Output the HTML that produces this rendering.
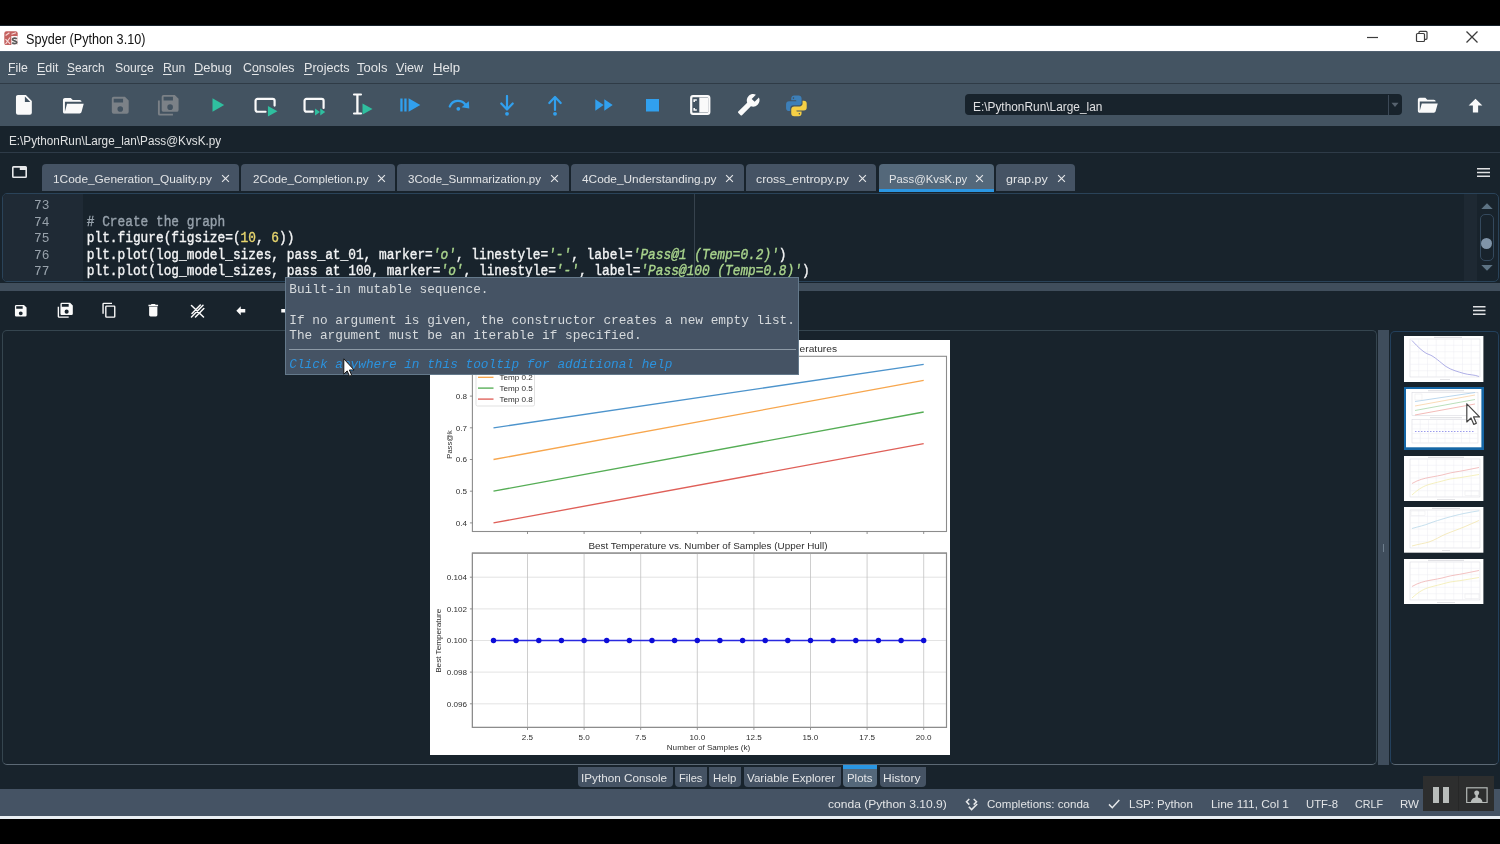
<!DOCTYPE html><html><head><meta charset="utf-8"><title>Spyder (Python 3.10)</title><style>
*{box-sizing:border-box;margin:0;padding:0}
html,body{width:1500px;height:844px;overflow:hidden;background:#000}
body{position:relative;font-family:"Liberation Sans",sans-serif;color:#e0e1e3;font-size:13px}
div,span,svg{position:absolute}
.t{white-space:nowrap;line-height:1}
.mono{font-family:"Liberation Mono",monospace;white-space:pre;line-height:1;transform:scaleY(1.07);transform-origin:0 43.65%}
.tab{background:#455364;border-radius:4px 4px 0 0}
.tab.sel{background:#54687a}
.bt{background:#455364;border-radius:0 0 4px 4px}
.cm{color:#96a1ab;position:static}.nu{color:#e8d66e;position:static}.st{color:#a9d48d;font-style:italic;position:static}
u{text-decoration:underline;text-decoration-thickness:1.1px;text-underline-offset:1.6px}
</style></head><body><div id="root" style="left:0;top:0;width:1500px;height:844px;background:#000;filter:blur(0.6px)">
<div style="left:0px;top:25px;width:1500px;height:793px;background:#18232c;"></div>
<div style="left:0px;top:25.6px;width:1500px;height:25.4px;background:#ffffff;"></div>
<svg style="left:4px;top:30.500px" width="14" height="14.500" viewBox="0 0 14 14.500"><rect x="0.300" y="0.300" width="13.400" height="13.900" rx="2.200" fill="#c4615f"/><path d="M7.300 5h6.400v7a2.200 2.200 0 0 1-2.200 2.200h-4.200z" fill="#fdf7f7"/><path d="M1.600 13l4.400-6.500M1.500 8.200l4.600 4.600M1.600 4.500l3.800-2.800M7.500 3.200l4.500-1.500" stroke="#f6d9d8" stroke-width="1.200" fill="none"/><path d="M12.800 7.900c-1.200-1.100-4.300-1.100-4.300 .6c0 1.700 4.300 .900 4.300 2.800c0 1.700-3.500 1.600-4.600 .3" stroke="#5a5a5a" stroke-width="1.700" fill="none"/></svg>
<span class="t" style="left:25.6px;top:32.21px;font-size:14px;color:#111;transform:scaleX(0.9025);transform-origin:0 0;">Spyder (Python 3.10)</span>
<svg style="left:1366px;top:31px" width="14" height="14" viewBox="0 0 14 14"><path d="M1 6.500h11" stroke="#3c3c3c" stroke-width="1.200"/></svg>
<svg style="left:1415px;top:30px" width="14" height="14" viewBox="0 0 14 14"><rect x="1.500" y="3.500" width="8" height="8" rx="1" fill="none" stroke="#3c3c3c" stroke-width="1.200"/><path d="M4 3.500v-1.200a1 1 0 0 1 1-1h6a1 1 0 0 1 1 1v6a1 1 0 0 1-1 1h-1.500" fill="none" stroke="#3c3c3c" stroke-width="1.200"/></svg>
<svg style="left:1465px;top:30px" width="14" height="14" viewBox="0 0 14 14"><path d="M1.500 1.500l11 11M12.500 1.500l-11 11" stroke="#3c3c3c" stroke-width="1.300"/></svg>
<div style="left:0px;top:51px;width:1500px;height:33px;background:#445462;"></div>
<div style="left:0px;top:51px;width:1500px;height:1px;background:#506070;"></div>
<span class="t" style="left:7.7px;top:61.21px;font-size:13.4px;color:#e4e6e8;transform:scaleX(0.9170);transform-origin:0 0;"><u style="position:static">F</u>ile</span>
<span class="t" style="left:36.5px;top:61.21px;font-size:13.4px;color:#e4e6e8;transform:scaleX(0.9268);transform-origin:0 0;"><u style="position:static">E</u>dit</span>
<span class="t" style="left:67.2px;top:61.21px;font-size:13.4px;color:#e4e6e8;transform:scaleX(0.8856);transform-origin:0 0;"><u style="position:static">S</u>earch</span>
<span class="t" style="left:114.9px;top:61.21px;font-size:13.4px;color:#e4e6e8;transform:scaleX(0.9115);transform-origin:0 0;">Sour<u style="position:static">c</u>e</span>
<span class="t" style="left:162.9px;top:61.21px;font-size:13.4px;color:#e4e6e8;transform:scaleX(0.9112);transform-origin:0 0;"><u style="position:static">R</u>un</span>
<span class="t" style="left:194.4px;top:61.21px;font-size:13.4px;color:#e4e6e8;transform:scaleX(0.9598);transform-origin:0 0;"><u style="position:static">D</u>ebug</span>
<span class="t" style="left:242.5px;top:61.21px;font-size:13.4px;color:#e4e6e8;transform:scaleX(0.9219);transform-origin:0 0;">C<u style="position:static">o</u>nsoles</span>
<span class="t" style="left:303.6px;top:61.21px;font-size:13.4px;color:#e4e6e8;transform:scaleX(0.9420);transform-origin:0 0;"><u style="position:static">P</u>rojects</span>
<span class="t" style="left:357.2px;top:61.21px;font-size:13.4px;color:#e4e6e8;transform:scaleX(0.9718);transform-origin:0 0;"><u style="position:static">T</u>ools</span>
<span class="t" style="left:396.4px;top:61.21px;font-size:13.4px;color:#e4e6e8;transform:scaleX(0.9444);transform-origin:0 0;"><u style="position:static">V</u>iew</span>
<span class="t" style="left:432.9px;top:61.21px;font-size:13.4px;color:#e4e6e8;transform:scaleX(0.9833);transform-origin:0 0;"><u style="position:static">H</u>elp</span>
<div style="left:0px;top:84px;width:1500px;height:41.7px;background:#435361;"></div>
<div style="left:0px;top:83px;width:1500px;height:1.2px;background:#2f3b46;"></div>
<div id="tb" style="left:0;top:84px;width:1500px;height:41px">
<svg style="left:11.8px;top:9.1px" width="23.8" height="23.8" viewBox="0 0 24 24"><path d="M13,9V3.5L18.5,9M6,2C4.89,2 4,2.89 4,4V20A2,2 0 0,0 6,22H18A2,2 0 0,0 20,20V8L14,2H6Z" fill="#fafafa"/></svg>
<svg style="left:60.8px;top:9.6px" width="23.5" height="23.5" viewBox="0 0 24 24"><path d="M19,20H4C2.89,20 2,19.1 2,18V6C2,4.89 2.89,4 4,4H10L12,6H19A2,2 0 0,1 21,8H21L4,8V18L6.14,10H23.21L20.93,18.5C20.7,19.37 19.92,20 19,20Z" fill="#fafafa"/></svg>
<svg style="left:109.0px;top:10.2px" width="22.5" height="22.5" viewBox="0 0 24 24"><path d="M15,9H5V5H15M12,19A3,3 0 0,1 9,16A3,3 0 0,1 12,13A3,3 0 0,1 15,16A3,3 0 0,1 12,19M17,3H5C3.89,3 3,3.9 3,5V19A2,2 0 0,0 5,21H19A2,2 0 0,0 21,19V7L17,3Z" fill="#7b8187"/></svg>
<svg style="left:157.2px;top:10.2px" width="22.5" height="22.5" viewBox="0 0 24 24"><path d="M17,7V3H7V7H17M14,17A3,3 0 0,0 17,14A3,3 0 0,0 14,11A3,3 0 0,0 11,14A3,3 0 0,0 14,17M19,1L23,5V17A2,2 0 0,1 21,19H7C5.89,19 5,18.1 5,17V3A2,2 0 0,1 7,1H19M1,7H3V21H17V23H3A2,2 0 0,1 1,21V7Z" fill="#7b8187"/></svg>
<svg style="left:212px;top:14px" width="13" height="14" viewBox="0 0 13 14"><path d="M0.500,0.300L12.200,7L0.500,13.700Z" fill="#2fbf9f"/></svg>
<svg style="left:253.5px;top:12.5px" width="25" height="20" viewBox="0 0 26 21"><path d="M12,15.500H3.500a2,2 0 0 1-2-2v-9.500a2,2 0 0 1 2-2h16a2,2 0 0 1 2,2v5" fill="none" stroke="#fafafa" stroke-width="2.300" stroke-linecap="round"/><path d="M14.500,9.500L24.500,15L14.500,20.500Z" fill="#2fbf9f"/></svg>
<svg style="left:302.5px;top:11.5px" width="25" height="20" viewBox="0 0 26 21"><path d="M10,16.500H3.500a2,2 0 0 1-2-2v-9.500a2,2 0 0 1 2-2h16a2,2 0 0 1 2,2v7.500" fill="none" stroke="#fafafa" stroke-width="2.300" stroke-linecap="round"/><path d="M12.500,13L17.700,16.800L12.500,20.600ZM18,13L23.200,16.800L18,20.600Z" fill="#2fbf9f"/></svg>
<svg style="left:352px;top:9px" width="22" height="23" viewBox="0 0 22 23"><path d="M2,1.500h7M2,20.500h7" fill="none" stroke="#fafafa" stroke-width="2.100" stroke-linecap="round"/><path d="M5.400,1.500v19" stroke="#fafafa" stroke-width="2.300"/><path d="M10.500,10.500L20.500,16L10.500,21.500Z" fill="#2fbf9f"/></svg>
<svg style="left:400px;top:14px" width="21" height="14" viewBox="0 0 21 14"><path d="M0.300,0.500h2.300v13h-2.300zM4.300,0.500h2.300v13h-2.300zM8.600,0.300L20.300,7L8.600,13.700Z" fill="#31a0ee"/></svg>
<svg style="left:448px;top:14px" width="23" height="14" viewBox="0 0 23 14"><path d="M1.800,8.500C4.500,1.500 13.500,1.200 17.300,6.500" fill="none" stroke="#31a0ee" stroke-width="2.300" stroke-linecap="round"/><path d="M20.800,3.200L21.300,10.600L13.600,9.300Z" fill="#31a0ee"/><circle cx="10.300" cy="10.800" r="1.900" fill="#31a0ee"/></svg>
<svg style="left:499px;top:11px" width="16" height="21" viewBox="0 0 16 21"><path d="M8,1v12.500M2.300,8.500l5.700,6l5.700,-6" fill="none" stroke="#31a0ee" stroke-width="2.200" stroke-linecap="round" stroke-linejoin="round"/><circle cx="8" cy="18.800" r="1.900" fill="#31a0ee"/></svg>
<svg style="left:547px;top:11px" width="16" height="21" viewBox="0 0 16 21"><path d="M8,15v-12.500M2.300,8l5.700,-6l5.700,6" fill="none" stroke="#31a0ee" stroke-width="2.200" stroke-linecap="round" stroke-linejoin="round"/><circle cx="8" cy="18.800" r="1.900" fill="#31a0ee"/></svg>
<svg style="left:595px;top:15px" width="18" height="12" viewBox="0 0 18 12"><path d="M0.300,0.300L8.600,6L0.300,11.700ZM9.300,0.300L17.700,6L9.300,11.700Z" fill="#31a0ee"/></svg>
<svg style="left:645.5px;top:15px" width="13" height="12.5" viewBox="0 0 13 12.5"><rect x="0" y="0" width="13" height="12.500" fill="#31a0ee"/></svg>
<svg style="left:690px;top:11px" width="20.5" height="20" viewBox="0 0 20.5 20"><rect x="1.200" y="1.200" width="18.100" height="17.600" rx="1.800" fill="none" stroke="#fafafa" stroke-width="2.200"/><rect x="9.300" y="2.500" width="8.800" height="15" fill="#fafafa"/><path d="M4.200,7v-2h2.600M4.200,13v2h2.600" fill="none" stroke="#fafafa" stroke-width="1.600"/></svg>
<svg style="left:737.0px;top:9.2px" width="23.5" height="23.5" viewBox="0 0 24 24"><path d="M22.7,19L13.6,9.9C14.5,7.6 14,4.9 12.1,3C10.1,1 7.1,0.6 4.7,1.7L9,6L6,9L1.6,4.7C0.4,7.1 0.9,10.1 2.9,12.1C4.8,14 7.5,14.5 9.8,13.6L18.9,22.7C19.3,23.1 19.9,23.1 20.3,22.7L22.6,20.4C23.1,20 23.1,19.3 22.7,19Z" fill="#fafafa" transform="translate(24,0) scale(-1,1)"/></svg>
<svg style="left:784.4px;top:9.4px" width="24.800" height="24.800" viewBox="0 0 24 24"><path d="M4.86,17.5C3.28,17.5 2,16.22 2,14.64V10.86C2,9.28 3.28,8 4.86,8H12C12,7.61 11.68,7.04 11.29,7.04H7V5.36C7,3.78 8.28,2.5 9.86,2.5H14.14C15.72,2.5 17,3.78 17,5.36V9.11C17,10.69 15.72,11.96 14.14,11.96H8.89C7.31,11.96 6.04,13.24 6.04,14.82V17.5H4.86M9.14,5.71C9.54,5.71 9.86,5.41 9.86,4.82C9.86,4.23 9.54,4.11 9.14,4.11C8.75,4.11 8.43,4.23 8.43,4.82C8.43,5.41 8.75,5.71 9.14,5.71Z" fill="#3d7fb8"/><path d="M19.14,7.5A2.86,2.86 0 0,1 22,10.36V14.14A2.86,2.86 0 0,1 19.14,17H12C12,17.39 12.32,17.96 12.71,17.96H17V19.64A2.86,2.86 0 0,1 14.14,22.5H9.86A2.86,2.86 0 0,1 7,19.64V15.89C7,14.31 8.28,13.04 9.86,13.04H15.11C16.69,13.04 17.96,11.76 17.96,10.18V7.5H19.14M14.86,19.29C14.46,19.29 14.14,19.59 14.14,20.18C14.14,20.77 14.46,20.89 14.86,20.89A0.71,0.71 0 0,0 15.57,20.18C15.57,19.59 15.25,19.29 14.86,19.29Z" fill="#f5cf45"/></svg>
<div style="left:965px;top:10.200px;width:437px;height:21.300px;background:#18232c;border-radius:4px"></div>
<div style="left:1388px;top:11px;width:1px;height:20px;background:#3c4957"></div>
<svg style="left:1391px;top:18px" width="8" height="6" viewBox="0 0 8 6"><path d="M0.500,0.800h7l-3.500,4.200z" fill="#56626e"/></svg>
<svg style="left:1416.0px;top:10.2px" width="22.5" height="22.5" viewBox="0 0 24 24"><path d="M19,20H4C2.89,20 2,19.1 2,18V6C2,4.89 2.89,4 4,4H10L12,6H19A2,2 0 0,1 21,8H21L4,8V18L6.14,10H23.21L20.93,18.5C20.7,19.37 19.92,20 19,20Z" fill="#fafafa"/></svg>
<svg style="left:1464.8px;top:10.8px" width="21" height="21" viewBox="0 0 24 24"><path d="M15,20H9V12H4.16L12,4.16L19.84,12H15V20Z" fill="#fafafa"/></svg>
</div>
<span class="t" style="left:973.3px;top:100.76px;font-size:12.1px;color:#e0e1e3;transform:scaleX(0.9814);transform-origin:0 0;">E:\PythonRun\Large_lan</span>
<div style="left:0px;top:152.3px;width:1500px;height:1px;background:#2e3b48;"></div>
<span class="t" style="left:9.1px;top:135.06px;font-size:12.3px;color:#dfe1e2;transform:scaleX(0.9542);transform-origin:0 0;">E:\PythonRun\Large_lan\Pass@KvsK.py</span>
<svg style="left:11px;top:165px" width="17" height="14" viewBox="0 0 17 14"><path d="M2.500 1h12a1.500 1.500 0 0 1 1.500 1.500v9a1.500 1.500 0 0 1-1.500 1.500h-12a1.500 1.500 0 0 1-1.500-1.500v-9a1.500 1.500 0 0 1 1.500-1.500zM2.600 2.800v8.600h11.800v-6.400h-5.600v-2.200z" fill="#e6e8ea" fill-rule="evenodd"/></svg>
<div class="tab" style="left:42px;top:164.400px;width:197.2px;height:26.2px"></div>
<span class="t" style="left:53.3px;top:173.87px;font-size:11.4px;color:#e2e4e6;transform:scaleX(1.0425);transform-origin:0 0;">1Code_Generation_Quality.py</span>
<svg style="left:220.5px;top:174px" width="9" height="9" viewBox="0 0 9 9"><path d="M1.100 1.100l6.800 6.800M7.900 1.100l-6.800 6.800" stroke="#e4e6e8" stroke-width="1.150"/></svg>
<div class="tab" style="left:241.2px;top:164.400px;width:154.0px;height:26.2px"></div>
<span class="t" style="left:252.7px;top:173.87px;font-size:11.4px;color:#e2e4e6;transform:scaleX(1.0248);transform-origin:0 0;">2Code_Completion.py</span>
<svg style="left:376.5px;top:174px" width="9" height="9" viewBox="0 0 9 9"><path d="M1.100 1.100l6.800 6.800M7.900 1.100l-6.800 6.800" stroke="#e4e6e8" stroke-width="1.150"/></svg>
<div class="tab" style="left:397.2px;top:164.400px;width:171.6px;height:26.2px"></div>
<span class="t" style="left:408.4px;top:173.87px;font-size:11.4px;color:#e2e4e6;transform:scaleX(1.0155);transform-origin:0 0;">3Code_Summarization.py</span>
<svg style="left:550.3px;top:174px" width="9" height="9" viewBox="0 0 9 9"><path d="M1.100 1.100l6.800 6.800M7.900 1.100l-6.800 6.800" stroke="#e4e6e8" stroke-width="1.150"/></svg>
<div class="tab" style="left:571.3px;top:164.400px;width:172.3px;height:26.2px"></div>
<span class="t" style="left:582px;top:173.87px;font-size:11.4px;color:#e2e4e6;transform:scaleX(1.0403);transform-origin:0 0;">4Code_Understanding.py</span>
<svg style="left:724.5px;top:174px" width="9" height="9" viewBox="0 0 9 9"><path d="M1.100 1.100l6.800 6.800M7.900 1.100l-6.800 6.800" stroke="#e4e6e8" stroke-width="1.150"/></svg>
<div class="tab" style="left:745.7px;top:164.400px;width:130.7px;height:26.2px"></div>
<span class="t" style="left:756.1px;top:173.87px;font-size:11.4px;color:#e2e4e6;transform:scaleX(1.0819);transform-origin:0 0;">cross_entropy.py</span>
<svg style="left:857.8px;top:174px" width="9" height="9" viewBox="0 0 9 9"><path d="M1.100 1.100l6.800 6.800M7.900 1.100l-6.800 6.800" stroke="#e4e6e8" stroke-width="1.150"/></svg>
<div class="tab sel" style="left:879px;top:164.400px;width:114.5px;height:27.9px"></div>
<div style="left:879px;top:189.2px;width:114.5px;height:3.2px;background:#2a96e2;"></div>
<span class="t" style="left:888.6px;top:173.87px;font-size:11.4px;color:#e2e4e6;transform:scaleX(0.9945);transform-origin:0 0;">Pass@KvsK.py</span>
<svg style="left:975.1px;top:174px" width="9" height="9" viewBox="0 0 9 9"><path d="M1.100 1.100l6.800 6.800M7.900 1.100l-6.800 6.800" stroke="#e4e6e8" stroke-width="1.150"/></svg>
<div class="tab" style="left:996px;top:164.400px;width:79.0px;height:26.2px"></div>
<span class="t" style="left:1006.2px;top:173.87px;font-size:11.4px;color:#e2e4e6;transform:scaleX(1.0993);transform-origin:0 0;">grap.py</span>
<svg style="left:1056.9px;top:174px" width="9" height="9" viewBox="0 0 9 9"><path d="M1.100 1.100l6.800 6.800M7.900 1.100l-6.800 6.800" stroke="#e4e6e8" stroke-width="1.150"/></svg>
<svg style="left:1477px;top:167.500px" width="13" height="9" viewBox="0 0 13 9"><path d="M0 0.800h13M0 4.500h13M0 8.200h13" stroke="#e0e1e3" stroke-width="1.500"/></svg>
<div style="left:1.500px;top:193px;width:1497px;height:88.500px;background:#18232c;border:1px solid #2a4359;border-radius:5px;overflow:hidden">
<div style="left:0;top:0;width:80px;height:100%;background:#1f2a35"></div>
<div style="left:1461px;top:0;width:13px;height:100%;background:#1e2933"></div>
<div style="left:691.500px;top:0;width:1px;height:100%;background:#36424d"></div>
</div>
<span class="mono" style="left:34px;top:200.35px;font-size:12.800px;color:#98a2ab">73</span>
<span class="mono" style="left:86.800px;top:200.35px;font-size:12.820px;color:#f2f3f4;-webkit-text-stroke:0.350px"></span>
<span class="mono" style="left:34px;top:216.88px;font-size:12.800px;color:#98a2ab">74</span>
<span class="mono" style="left:86.800px;top:216.88px;font-size:12.820px;color:#f2f3f4;-webkit-text-stroke:0.350px"><span class="cm"># Create the graph</span></span>
<span class="mono" style="left:34px;top:233.41px;font-size:12.800px;color:#98a2ab">75</span>
<span class="mono" style="left:86.800px;top:233.41px;font-size:12.820px;color:#f2f3f4;-webkit-text-stroke:0.350px">plt.figure(figsize=(<span class="nu">10</span>, <span class="nu">6</span>))</span>
<span class="mono" style="left:34px;top:249.94px;font-size:12.800px;color:#98a2ab">76</span>
<span class="mono" style="left:86.800px;top:249.94px;font-size:12.820px;color:#f2f3f4;-webkit-text-stroke:0.350px">plt.plot(log_model_sizes, pass_at_01, marker=<span class="st">'o'</span>, linestyle=<span class="st">'-'</span>, label=<span class="st">'Pass@1 (Temp=0.2)'</span>)</span>
<span class="mono" style="left:34px;top:266.47px;font-size:12.800px;color:#98a2ab">77</span>
<span class="mono" style="left:86.800px;top:266.47px;font-size:12.820px;color:#f2f3f4;-webkit-text-stroke:0.350px">plt.plot(log_model_sizes, pass at 100, marker=<span class="st">'o'</span>, linestyle=<span class="st">'-'</span>, label=<span class="st">'Pass@100 (Temp=0.8)'</span>)</span>
<svg style="left:1481px;top:203px" width="12" height="6" viewBox="0 0 12 6"><path d="M6 0.300l5.700 5.700h-11.400z" fill="#5d7384"/></svg>
<div style="left:1480px;top:213.500px;width:13.800px;height:47px;border:1px solid #34495d;border-radius:5px"></div>
<div style="left:1481px;top:237.600px;width:11.400px;height:11.400px;border-radius:50%;background:#8094a8"></div>
<svg style="left:1481px;top:265.3px" width="12" height="6" viewBox="0 0 12 6"><path d="M6 5.700l5.700 -5.700h-11.400z" fill="#5d7384"/></svg>
<div style="left:0px;top:282.7px;width:1500px;height:8px;background:#404e5c;"></div>
<div style="left:0;top:290px;width:1500px;height:40px">
<svg style="left:13.1px;top:12.8px" width="15.5" height="15.5" viewBox="0 0 24 24"><path d="M15,9H5V5H15M12,19A3,3 0 0,1 9,16A3,3 0 0,1 12,13A3,3 0 0,1 15,16A3,3 0 0,1 12,19M17,3H5C3.89,3 3,3.9 3,5V19A2,2 0 0,0 5,21H19A2,2 0 0,0 21,19V7L17,3Z" fill="#fafafa"/></svg>
<svg style="left:56.8px;top:11.9px" width="16.5" height="16.5" viewBox="0 0 24 24"><path d="M17,7V3H7V7H17M14,17A3,3 0 0,0 17,14A3,3 0 0,0 14,11A3,3 0 0,0 11,14A3,3 0 0,0 14,17M19,1L23,5V17A2,2 0 0,1 21,19H7C5.89,19 5,18.1 5,17V3A2,2 0 0,1 7,1H19M1,7H3V21H17V23H3A2,2 0 0,1 1,21V7Z" fill="#fafafa"/></svg>
<svg style="left:100.5px;top:11.8px" width="16.5" height="16.5" viewBox="0 0 24 24"><path d="M19,21H8V7H19M19,5H8A2,2 0 0,0 6,7V21A2,2 0 0,0 8,23H19A2,2 0 0,0 21,21V7A2,2 0 0,0 19,5M16,1H4A2,2 0 0,0 2,3V17H4V3H16V1Z" fill="#fafafa"/></svg>
<svg style="left:144.6px;top:11.8px" width="16.5" height="16.5" viewBox="0 0 24 24"><path d="M19,4H15.5L14.5,3H9.5L8.5,4H5V6H19M6,19A2,2 0 0,0 8,21H16A2,2 0 0,0 18,19V7H6V19Z" fill="#fafafa"/></svg>
<svg style="left:189.5px;top:13.5px" width="15" height="14" viewBox="0 0 15 14"><path d="M1.500,1.500l12,11.500M13,1.200l-11.500,11.800M10.300,1l-8.300,8.500M13.800,4.500l-8.300,8.500" fill="none" stroke="#fafafa" stroke-width="1.500" stroke-linecap="round"/></svg>
<svg style="left:234.1px;top:13.8px" width="13.5" height="13.5" viewBox="0 0 24 24"><path d="M20,9V15H12V19.84L4.16,12L12,4.16V9H20Z" fill="#fafafa"/></svg>
<svg style="left:278.8px;top:13.8px" width="13.5" height="13.5" viewBox="0 0 24 24"><path d="M4,15V9H12V4.16L19.84,12L12,19.84V15H4Z" fill="#fafafa"/></svg>
<svg style="left:1473px;top:16px" width="12.5" height="9" viewBox="0 0 12.5 9"><path d="M0 0.800h12.500M0 4.500h12.500M0 8.200h12.500" stroke="#e0e1e3" stroke-width="1.500"/></svg>
</div>
<div style="left:2px;top:330.300px;width:1375px;height:434.900px;border:1px solid #35454f;border-bottom-color:#5c6975;border-radius:5px;background:#18232c"></div>
<div style="left:1378.3px;top:330px;width:11px;height:435px;background:#3f4d5c;"></div>
<div style="left:1383.3px;top:544px;width:1px;height:8px;background:#6d7d8c;"></div>
<div style="left:1390px;top:330.500px;width:108.500px;height:434.700px;border:1px solid #23405c;border-bottom-color:#5c6975;border-radius:5px;background:#18232c"></div>
<div style="left:430.300px;top:339.800px;width:520px;height:415px;background:#fff;overflow:hidden"><svg width="520" height="415" viewBox="0 0 520 415" style="position:absolute;left:0;top:0"><rect width="520" height="415" fill="#fff"/><text x="407" y="12.3" text-anchor="end" font-family="Liberation Sans, sans-serif" font-size="9.2" fill="#2e2e2e" textLength="37.4" lengthAdjust="spacingAndGlyphs">eratures</text><rect x="42.4" y="16.3" width="474.1" height="175.2" fill="#fff" stroke="#8c8c8c" stroke-width="1.1"/><line x1="63.5" y1="87.8" x2="493.7" y2="24.4" stroke="#4d94cc" stroke-width="1.35"/><line x1="63.5" y1="119.5" x2="493.7" y2="40.3" stroke="#f7a64d" stroke-width="1.35"/><line x1="63.5" y1="151.2" x2="493.7" y2="72.0" stroke="#55ad55" stroke-width="1.35"/><line x1="63.5" y1="182.9" x2="493.7" y2="103.7" stroke="#df5f58" stroke-width="1.35"/><line x1="39.9" y1="182.9" x2="42.4" y2="182.9" stroke="#777" stroke-width="0.8"/><text x="36.9" y="185.8" text-anchor="end" font-family="Liberation Sans, sans-serif" font-size="8.1" fill="#2e2e2e">0.4</text><line x1="39.9" y1="151.2" x2="42.4" y2="151.2" stroke="#777" stroke-width="0.8"/><text x="36.9" y="154.1" text-anchor="end" font-family="Liberation Sans, sans-serif" font-size="8.1" fill="#2e2e2e">0.5</text><line x1="39.9" y1="119.5" x2="42.4" y2="119.5" stroke="#777" stroke-width="0.8"/><text x="36.9" y="122.4" text-anchor="end" font-family="Liberation Sans, sans-serif" font-size="8.1" fill="#2e2e2e">0.6</text><line x1="39.9" y1="87.8" x2="42.4" y2="87.8" stroke="#777" stroke-width="0.8"/><text x="36.9" y="90.7" text-anchor="end" font-family="Liberation Sans, sans-serif" font-size="8.1" fill="#2e2e2e">0.7</text><line x1="39.9" y1="56.1" x2="42.4" y2="56.1" stroke="#777" stroke-width="0.8"/><text x="36.9" y="59.0" text-anchor="end" font-family="Liberation Sans, sans-serif" font-size="8.1" fill="#2e2e2e">0.8</text><line x1="97.5" y1="191.5" x2="97.5" y2="194.0" stroke="#777" stroke-width="0.8"/><line x1="154.1" y1="191.5" x2="154.1" y2="194.0" stroke="#777" stroke-width="0.8"/><line x1="210.7" y1="191.5" x2="210.7" y2="194.0" stroke="#777" stroke-width="0.8"/><line x1="267.3" y1="191.5" x2="267.3" y2="194.0" stroke="#777" stroke-width="0.8"/><line x1="323.9" y1="191.5" x2="323.9" y2="194.0" stroke="#777" stroke-width="0.8"/><line x1="380.5" y1="191.5" x2="380.5" y2="194.0" stroke="#777" stroke-width="0.8"/><line x1="437.1" y1="191.5" x2="437.1" y2="194.0" stroke="#777" stroke-width="0.8"/><line x1="493.7" y1="191.5" x2="493.7" y2="194.0" stroke="#777" stroke-width="0.8"/><text transform="translate(21.7,104.5) rotate(-90)" text-anchor="middle" font-family="Liberation Sans, sans-serif" font-size="7.6" fill="#2e2e2e">Pass@k</text><rect x="46" y="14" width="58.5" height="52" rx="1.5" fill="#fff" stroke="#d9d9d9" stroke-width="0.8"/><line x1="48" y1="26.5" x2="63.5" y2="26.5" stroke="#4d94cc" stroke-width="1.35"/><text x="69.5" y="29.4" font-family="Liberation Sans, sans-serif" font-size="8.1" fill="#2e2e2e">Temp 0.1</text><line x1="48" y1="37.3" x2="63.5" y2="37.3" stroke="#f7a64d" stroke-width="1.35"/><text x="69.5" y="40.199999999999996" font-family="Liberation Sans, sans-serif" font-size="8.1" fill="#2e2e2e">Temp 0.2</text><line x1="48" y1="48.1" x2="63.5" y2="48.1" stroke="#55ad55" stroke-width="1.35"/><text x="69.5" y="51.0" font-family="Liberation Sans, sans-serif" font-size="8.1" fill="#2e2e2e">Temp 0.5</text><line x1="48" y1="59.1" x2="63.5" y2="59.1" stroke="#df5f58" stroke-width="1.35"/><text x="69.5" y="62.0" font-family="Liberation Sans, sans-serif" font-size="8.1" fill="#2e2e2e">Temp 0.8</text><text x="278" y="209.3" text-anchor="middle" font-family="Liberation Sans, sans-serif" font-size="9.2" fill="#2e2e2e" textLength="239" lengthAdjust="spacingAndGlyphs">Best Temperature vs. Number of Samples (Upper Hull)</text><rect x="42.4" y="213.1" width="474.1" height="174.29999999999998" fill="#fff" stroke="#8c8c8c" stroke-width="1.1"/><line x1="42.4" y1="237.2" x2="516.5" y2="237.2" stroke="#dcdcdc" stroke-width="0.8"/><line x1="39.9" y1="237.2" x2="42.4" y2="237.2" stroke="#777" stroke-width="0.8"/><text x="36.9" y="240.1" text-anchor="end" font-family="Liberation Sans, sans-serif" font-size="8.1" fill="#2e2e2e">0.104</text><line x1="42.4" y1="268.9" x2="516.5" y2="268.9" stroke="#dcdcdc" stroke-width="0.8"/><line x1="39.9" y1="268.9" x2="42.4" y2="268.9" stroke="#777" stroke-width="0.8"/><text x="36.9" y="271.8" text-anchor="end" font-family="Liberation Sans, sans-serif" font-size="8.1" fill="#2e2e2e">0.102</text><line x1="42.4" y1="300.5" x2="516.5" y2="300.5" stroke="#dcdcdc" stroke-width="0.8"/><line x1="39.9" y1="300.5" x2="42.4" y2="300.5" stroke="#777" stroke-width="0.8"/><text x="36.9" y="303.4" text-anchor="end" font-family="Liberation Sans, sans-serif" font-size="8.1" fill="#2e2e2e">0.100</text><line x1="42.4" y1="332.1" x2="516.5" y2="332.1" stroke="#dcdcdc" stroke-width="0.8"/><line x1="39.9" y1="332.1" x2="42.4" y2="332.1" stroke="#777" stroke-width="0.8"/><text x="36.9" y="335.0" text-anchor="end" font-family="Liberation Sans, sans-serif" font-size="8.1" fill="#2e2e2e">0.098</text><line x1="42.4" y1="363.8" x2="516.5" y2="363.8" stroke="#dcdcdc" stroke-width="0.8"/><line x1="39.9" y1="363.8" x2="42.4" y2="363.8" stroke="#777" stroke-width="0.8"/><text x="36.9" y="366.7" text-anchor="end" font-family="Liberation Sans, sans-serif" font-size="8.1" fill="#2e2e2e">0.096</text><line x1="97.5" y1="213.1" x2="97.5" y2="387.4" stroke="#c2c2c2" stroke-width="0.8"/><line x1="97.5" y1="387.4" x2="97.5" y2="389.9" stroke="#777" stroke-width="0.8"/><text x="97.5" y="399.6" text-anchor="middle" font-family="Liberation Sans, sans-serif" font-size="8.1" fill="#2e2e2e">2.5</text><line x1="154.1" y1="213.1" x2="154.1" y2="387.4" stroke="#c2c2c2" stroke-width="0.8"/><line x1="154.1" y1="387.4" x2="154.1" y2="389.9" stroke="#777" stroke-width="0.8"/><text x="154.1" y="399.6" text-anchor="middle" font-family="Liberation Sans, sans-serif" font-size="8.1" fill="#2e2e2e">5.0</text><line x1="210.7" y1="213.1" x2="210.7" y2="387.4" stroke="#c2c2c2" stroke-width="0.8"/><line x1="210.7" y1="387.4" x2="210.7" y2="389.9" stroke="#777" stroke-width="0.8"/><text x="210.7" y="399.6" text-anchor="middle" font-family="Liberation Sans, sans-serif" font-size="8.1" fill="#2e2e2e">7.5</text><line x1="267.3" y1="213.1" x2="267.3" y2="387.4" stroke="#c2c2c2" stroke-width="0.8"/><line x1="267.3" y1="387.4" x2="267.3" y2="389.9" stroke="#777" stroke-width="0.8"/><text x="267.3" y="399.6" text-anchor="middle" font-family="Liberation Sans, sans-serif" font-size="8.1" fill="#2e2e2e">10.0</text><line x1="323.9" y1="213.1" x2="323.9" y2="387.4" stroke="#c2c2c2" stroke-width="0.8"/><line x1="323.9" y1="387.4" x2="323.9" y2="389.9" stroke="#777" stroke-width="0.8"/><text x="323.9" y="399.6" text-anchor="middle" font-family="Liberation Sans, sans-serif" font-size="8.1" fill="#2e2e2e">12.5</text><line x1="380.5" y1="213.1" x2="380.5" y2="387.4" stroke="#c2c2c2" stroke-width="0.8"/><line x1="380.5" y1="387.4" x2="380.5" y2="389.9" stroke="#777" stroke-width="0.8"/><text x="380.5" y="399.6" text-anchor="middle" font-family="Liberation Sans, sans-serif" font-size="8.1" fill="#2e2e2e">15.0</text><line x1="437.1" y1="213.1" x2="437.1" y2="387.4" stroke="#c2c2c2" stroke-width="0.8"/><line x1="437.1" y1="387.4" x2="437.1" y2="389.9" stroke="#777" stroke-width="0.8"/><text x="437.1" y="399.6" text-anchor="middle" font-family="Liberation Sans, sans-serif" font-size="8.1" fill="#2e2e2e">17.5</text><line x1="493.7" y1="213.1" x2="493.7" y2="387.4" stroke="#c2c2c2" stroke-width="0.8"/><line x1="493.7" y1="387.4" x2="493.7" y2="389.9" stroke="#777" stroke-width="0.8"/><text x="493.7" y="399.6" text-anchor="middle" font-family="Liberation Sans, sans-serif" font-size="8.1" fill="#2e2e2e">20.0</text><rect x="42.4" y="213.1" width="474.1" height="174.29999999999998" fill="none" stroke="#8c8c8c" stroke-width="1.1"/><line x1="63.5" y1="300.5" x2="493.7" y2="300.5" stroke="#2a2ae0" stroke-width="1.4"/><circle cx="63.5" cy="300.5" r="2.7" fill="#0c0cd8"/><circle cx="86.1" cy="300.5" r="2.7" fill="#0c0cd8"/><circle cx="108.8" cy="300.5" r="2.7" fill="#0c0cd8"/><circle cx="131.4" cy="300.5" r="2.7" fill="#0c0cd8"/><circle cx="154.1" cy="300.5" r="2.7" fill="#0c0cd8"/><circle cx="176.7" cy="300.5" r="2.7" fill="#0c0cd8"/><circle cx="199.4" cy="300.5" r="2.7" fill="#0c0cd8"/><circle cx="222.0" cy="300.5" r="2.7" fill="#0c0cd8"/><circle cx="244.6" cy="300.5" r="2.7" fill="#0c0cd8"/><circle cx="267.3" cy="300.5" r="2.7" fill="#0c0cd8"/><circle cx="289.9" cy="300.5" r="2.7" fill="#0c0cd8"/><circle cx="312.6" cy="300.5" r="2.7" fill="#0c0cd8"/><circle cx="335.2" cy="300.5" r="2.7" fill="#0c0cd8"/><circle cx="357.8" cy="300.5" r="2.7" fill="#0c0cd8"/><circle cx="380.5" cy="300.5" r="2.7" fill="#0c0cd8"/><circle cx="403.1" cy="300.5" r="2.7" fill="#0c0cd8"/><circle cx="425.8" cy="300.5" r="2.7" fill="#0c0cd8"/><circle cx="448.4" cy="300.5" r="2.7" fill="#0c0cd8"/><circle cx="471.1" cy="300.5" r="2.7" fill="#0c0cd8"/><circle cx="493.7" cy="300.5" r="2.7" fill="#0c0cd8"/><text transform="translate(10.6,300.8) rotate(-90)" text-anchor="middle" font-family="Liberation Sans, sans-serif" font-size="8.1" fill="#2e2e2e" textLength="64" lengthAdjust="spacingAndGlyphs">Best Temperature</text><text x="278.5" y="409.7" text-anchor="middle" font-family="Liberation Sans, sans-serif" font-size="8.1" fill="#2e2e2e" textLength="83.5" lengthAdjust="spacingAndGlyphs">Number of Samples (k)</text></svg></div>
<svg style="left:1404.2px;top:335.5px" width="79.4" height="46.3" viewBox="0 0 79.4 46.3"><rect width="79.4" height="46.3" fill="#fff"/><rect x="6" y="3" width="70" height="38" fill="none" stroke="#d4d4dc" stroke-width="0.500"/><line x1="14.8" y1="3" x2="14.8" y2="41" stroke="#ececf2" stroke-width="0.500"/><line x1="23.5" y1="3" x2="23.5" y2="41" stroke="#ececf2" stroke-width="0.500"/><line x1="32.2" y1="3" x2="32.2" y2="41" stroke="#ececf2" stroke-width="0.500"/><line x1="41.0" y1="3" x2="41.0" y2="41" stroke="#ececf2" stroke-width="0.500"/><line x1="49.8" y1="3" x2="49.8" y2="41" stroke="#ececf2" stroke-width="0.500"/><line x1="58.5" y1="3" x2="58.5" y2="41" stroke="#ececf2" stroke-width="0.500"/><line x1="67.2" y1="3" x2="67.2" y2="41" stroke="#ececf2" stroke-width="0.500"/><line x1="6" y1="9.3" x2="76" y2="9.3" stroke="#ececf2" stroke-width="0.500"/><line x1="6" y1="15.7" x2="76" y2="15.7" stroke="#ececf2" stroke-width="0.500"/><line x1="6" y1="22.0" x2="76" y2="22.0" stroke="#ececf2" stroke-width="0.500"/><line x1="6" y1="28.3" x2="76" y2="28.3" stroke="#ececf2" stroke-width="0.500"/><line x1="6" y1="34.7" x2="76" y2="34.7" stroke="#ececf2" stroke-width="0.500"/><path d="M8,4.500C14,11 20,17 25,18.500S37,27 42,30.500S55,36 60,37.500S70,38.500 75,40.500" fill="none" stroke="#9a9ae0" stroke-width="0.800"/><rect x="30" y="0.800" width="28" height="1" fill="#d9d9de"/><rect x="36" y="43.200" width="10" height="0.800" fill="#dcdce0"/></svg><div style="left:1404.2px;top:387.3px;width:79.4px;height:62.3px;background:#1566a5"></div><svg style="left:1406.2px;top:389.3px" width="75.4" height="58.3" viewBox="0 0 75.4 58.3"><rect width="75.4" height="58.3" fill="#fff"/><rect x="6" y="3.5" width="66" height="23.0" fill="none" stroke="#d4d4dc" stroke-width="0.500"/><line x1="9" y1="12.5" x2="69" y2="3.5" stroke="#a9cdea" stroke-width="0.800"/><line x1="9" y1="17" x2="69" y2="6" stroke="#f9d2a5" stroke-width="0.800"/><line x1="9" y1="21.5" x2="69" y2="10.5" stroke="#aad7aa" stroke-width="0.800"/><line x1="9" y1="26" x2="69" y2="15" stroke="#f0aaa6" stroke-width="0.800"/><rect x="6" y="30.5" width="66" height="23.5" fill="none" stroke="#d4d4dc" stroke-width="0.500"/><line x1="14.2" y1="30.5" x2="14.2" y2="54" stroke="#ececf2" stroke-width="0.500"/><line x1="22.5" y1="30.5" x2="22.5" y2="54" stroke="#ececf2" stroke-width="0.500"/><line x1="30.8" y1="30.5" x2="30.8" y2="54" stroke="#ececf2" stroke-width="0.500"/><line x1="39.0" y1="30.5" x2="39.0" y2="54" stroke="#ececf2" stroke-width="0.500"/><line x1="47.2" y1="30.5" x2="47.2" y2="54" stroke="#ececf2" stroke-width="0.500"/><line x1="55.5" y1="30.5" x2="55.5" y2="54" stroke="#ececf2" stroke-width="0.500"/><line x1="63.8" y1="30.5" x2="63.8" y2="54" stroke="#ececf2" stroke-width="0.500"/><line x1="6" y1="35.2" x2="72" y2="35.2" stroke="#ececf2" stroke-width="0.500"/><line x1="6" y1="39.9" x2="72" y2="39.9" stroke="#ececf2" stroke-width="0.500"/><line x1="6" y1="44.6" x2="72" y2="44.6" stroke="#ececf2" stroke-width="0.500"/><line x1="6" y1="49.3" x2="72" y2="49.3" stroke="#ececf2" stroke-width="0.500"/><line x1="9" y1="42.500" x2="69" y2="42.500" stroke="#9c9cec" stroke-width="1.100" stroke-dasharray="1.500 1.500"/><rect x="22" y="1.300" width="36" height="0.900" fill="#d9d9de"/><rect x="24" y="28.300" width="32" height="0.900" fill="#d9d9de"/><rect x="9" y="5" width="7" height="6" fill="none" stroke="#e2e2e6" stroke-width="0.400"/></svg><svg style="left:1404.2px;top:455.6px" width="79.4" height="45.7" viewBox="0 0 79.4 45.7"><rect width="79.4" height="45.7" fill="#fff"/><rect x="6" y="3" width="70" height="38" fill="none" stroke="#d4d4dc" stroke-width="0.500"/><line x1="14.8" y1="3" x2="14.8" y2="41" stroke="#ececf2" stroke-width="0.500"/><line x1="23.5" y1="3" x2="23.5" y2="41" stroke="#ececf2" stroke-width="0.500"/><line x1="32.2" y1="3" x2="32.2" y2="41" stroke="#ececf2" stroke-width="0.500"/><line x1="41.0" y1="3" x2="41.0" y2="41" stroke="#ececf2" stroke-width="0.500"/><line x1="49.8" y1="3" x2="49.8" y2="41" stroke="#ececf2" stroke-width="0.500"/><line x1="58.5" y1="3" x2="58.5" y2="41" stroke="#ececf2" stroke-width="0.500"/><line x1="67.2" y1="3" x2="67.2" y2="41" stroke="#ececf2" stroke-width="0.500"/><line x1="6" y1="9.3" x2="76" y2="9.3" stroke="#ececf2" stroke-width="0.500"/><line x1="6" y1="15.7" x2="76" y2="15.7" stroke="#ececf2" stroke-width="0.500"/><line x1="6" y1="22.0" x2="76" y2="22.0" stroke="#ececf2" stroke-width="0.500"/><line x1="6" y1="28.3" x2="76" y2="28.3" stroke="#ececf2" stroke-width="0.500"/><line x1="6" y1="34.7" x2="76" y2="34.7" stroke="#ececf2" stroke-width="0.500"/><path d="M8,27.500C15,23.500 20,22.500 25,21.500S37,19.500 42,18S55,15.500 60,14.500S70,12.500 75,11.500" fill="none" stroke="#f0b3b3" stroke-width="0.800"/><path d="M8,39C15,32.500 20,30 25,28.500S37,25.500 42,24S55,22 60,21S70,19.500 75,18.500" fill="none" stroke="#f3ecae" stroke-width="0.800"/><rect x="24" y="0.800" width="36" height="1" fill="#d9d9de"/><rect x="33" y="43.200" width="18" height="0.800" fill="#dcdce0"/><rect x="61" y="35" width="14" height="4.500" fill="none" stroke="#e4e4e8" stroke-width="0.400"/></svg><svg style="left:1404.2px;top:507px" width="79.4" height="45.7" viewBox="0 0 79.4 45.7"><rect width="79.4" height="45.7" fill="#fff"/><rect x="6" y="3" width="70" height="38" fill="none" stroke="#d4d4dc" stroke-width="0.500"/><line x1="14.8" y1="3" x2="14.8" y2="41" stroke="#ececf2" stroke-width="0.500"/><line x1="23.5" y1="3" x2="23.5" y2="41" stroke="#ececf2" stroke-width="0.500"/><line x1="32.2" y1="3" x2="32.2" y2="41" stroke="#ececf2" stroke-width="0.500"/><line x1="41.0" y1="3" x2="41.0" y2="41" stroke="#ececf2" stroke-width="0.500"/><line x1="49.8" y1="3" x2="49.8" y2="41" stroke="#ececf2" stroke-width="0.500"/><line x1="58.5" y1="3" x2="58.5" y2="41" stroke="#ececf2" stroke-width="0.500"/><line x1="67.2" y1="3" x2="67.2" y2="41" stroke="#ececf2" stroke-width="0.500"/><line x1="6" y1="9.3" x2="76" y2="9.3" stroke="#ececf2" stroke-width="0.500"/><line x1="6" y1="15.7" x2="76" y2="15.7" stroke="#ececf2" stroke-width="0.500"/><line x1="6" y1="22.0" x2="76" y2="22.0" stroke="#ececf2" stroke-width="0.500"/><line x1="6" y1="28.3" x2="76" y2="28.3" stroke="#ececf2" stroke-width="0.500"/><line x1="6" y1="34.7" x2="76" y2="34.7" stroke="#ececf2" stroke-width="0.500"/><path d="M8,21.500C15,19.500 20,18.500 25,16.500S37,12.500 42,11S55,7.500 60,6.500S70,4.500 75,3.800" fill="none" stroke="#b9d8ea" stroke-width="0.800"/><path d="M8,39C15,37 20,36.500 25,35S37,29 42,27S55,22 60,20S70,15.500 75,13.500" fill="none" stroke="#f3e6ae" stroke-width="0.800"/><rect x="28" y="0.800" width="28" height="1" fill="#d9d9de"/><rect x="38" y="43.200" width="8" height="0.800" fill="#dcdce0"/><rect x="7" y="4" width="14" height="4.500" fill="none" stroke="#e4e4e8" stroke-width="0.400"/></svg><svg style="left:1404.2px;top:558.8px" width="79.4" height="45.7" viewBox="0 0 79.4 45.7"><rect width="79.4" height="45.7" fill="#fff"/><rect x="6" y="3" width="70" height="38" fill="none" stroke="#d4d4dc" stroke-width="0.500"/><line x1="14.8" y1="3" x2="14.8" y2="41" stroke="#ececf2" stroke-width="0.500"/><line x1="23.5" y1="3" x2="23.5" y2="41" stroke="#ececf2" stroke-width="0.500"/><line x1="32.2" y1="3" x2="32.2" y2="41" stroke="#ececf2" stroke-width="0.500"/><line x1="41.0" y1="3" x2="41.0" y2="41" stroke="#ececf2" stroke-width="0.500"/><line x1="49.8" y1="3" x2="49.8" y2="41" stroke="#ececf2" stroke-width="0.500"/><line x1="58.5" y1="3" x2="58.5" y2="41" stroke="#ececf2" stroke-width="0.500"/><line x1="67.2" y1="3" x2="67.2" y2="41" stroke="#ececf2" stroke-width="0.500"/><line x1="6" y1="9.3" x2="76" y2="9.3" stroke="#ececf2" stroke-width="0.500"/><line x1="6" y1="15.7" x2="76" y2="15.7" stroke="#ececf2" stroke-width="0.500"/><line x1="6" y1="22.0" x2="76" y2="22.0" stroke="#ececf2" stroke-width="0.500"/><line x1="6" y1="28.3" x2="76" y2="28.3" stroke="#ececf2" stroke-width="0.500"/><line x1="6" y1="34.7" x2="76" y2="34.7" stroke="#ececf2" stroke-width="0.500"/><path d="M8,27.500C15,23.500 20,22.500 25,21.500S37,19.500 42,18S55,15.500 60,14.500S70,12.500 75,11.500" fill="none" stroke="#f0b3b3" stroke-width="0.800"/><path d="M8,39C15,32.500 20,30 25,28.500S37,25.500 42,24S55,22 60,21S70,19.500 75,18.500" fill="none" stroke="#f3ecae" stroke-width="0.800"/><rect x="24" y="0.800" width="36" height="1" fill="#d9d9de"/><rect x="33" y="43.200" width="18" height="0.800" fill="#dcdce0"/><rect x="61" y="35" width="14" height="4.500" fill="none" stroke="#e4e4e8" stroke-width="0.400"/></svg>
<div class="bt" style="left:577.6px;top:766.8px;width:95.8px;height:20.4px;"></div>
<span class="t" style="left:581.4px;top:773.42px;font-size:11.4px;color:#e2e4e6;transform:scaleX(1.0293);transform-origin:0 0;">IPython Console</span>
<div class="bt" style="left:675.1px;top:766.8px;width:31.7px;height:20.4px;"></div>
<span class="t" style="left:678.9px;top:773.42px;font-size:11.4px;color:#e2e4e6;transform:scaleX(0.9722);transform-origin:0 0;">Files</span>
<div class="bt" style="left:709.3px;top:766.8px;width:31.7px;height:20.4px;"></div>
<span class="t" style="left:713.1px;top:773.42px;font-size:11.4px;color:#e2e4e6;transform:scaleX(0.9980);transform-origin:0 0;">Help</span>
<div class="bt" style="left:743.6px;top:766.8px;width:97.5px;height:20.4px;"></div>
<span class="t" style="left:747.3px;top:773.42px;font-size:11.4px;color:#e2e4e6;transform:scaleX(1.0185);transform-origin:0 0;">Variable Explorer</span>
<div class="bt" style="left:843.1px;top:764.6px;width:34.2px;height:22.6px;background:#54687a"></div>
<div style="left:843.1px;top:764.6px;width:34.2px;height:4px;background:#2a96e2;"></div>
<span class="t" style="left:846.9px;top:773.42px;font-size:11.4px;color:#e2e4e6;transform:scaleX(1.0022);transform-origin:0 0;">Plots</span>
<div class="bt" style="left:879.6px;top:766.8px;width:46.4px;height:20.4px;"></div>
<span class="t" style="left:883.4px;top:773.42px;font-size:11.4px;color:#e2e4e6;transform:scaleX(1.0573);transform-origin:0 0;">History</span>
<div style="left:0px;top:789px;width:1500px;height:27px;background:#455364;"></div>
<div style="left:0px;top:816.3px;width:1500px;height:2.5px;background:#eaeff3;"></div>
<span class="t" style="left:827.9px;top:797.97px;font-size:11.6px;color:#e2e4e6;transform:scaleX(1.0408);transform-origin:0 0;">conda (Python 3.10.9)</span>
<span class="t" style="left:987px;top:797.97px;font-size:11.6px;color:#e2e4e6;transform:scaleX(0.9978);transform-origin:0 0;">Completions: conda</span>
<span class="t" style="left:1129.1px;top:797.97px;font-size:11.6px;color:#e2e4e6;transform:scaleX(0.9909);transform-origin:0 0;">LSP: Python</span>
<span class="t" style="left:1210.7px;top:797.97px;font-size:11.6px;color:#e2e4e6;transform:scaleX(1.0221);transform-origin:0 0;">Line 111, Col 1</span>
<span class="t" style="left:1306px;top:797.97px;font-size:11.6px;color:#e2e4e6;transform:scaleX(0.9737);transform-origin:0 0;">UTF-8</span>
<span class="t" style="left:1355.3px;top:797.97px;font-size:11.6px;color:#e2e4e6;transform:scaleX(0.9243);transform-origin:0 0;">CRLF</span>
<span class="t" style="left:1400px;top:797.97px;font-size:11.6px;color:#e2e4e6;transform:scaleX(0.9939);transform-origin:0 0;">RW</span>
<svg style="left:965px;top:797.5px" width="14" height="13" viewBox="0 0 14 13"><path d="M4.300 1l-2.800 2.800l2.800 2.800M8.700 1l2.800 2.800l-2.800 2.800" fill="none" stroke="#e6e8ea" stroke-width="1.500"/><path d="M3.800 8.800l2.800 2.800l5.600-5.600" fill="none" stroke="#e6e8ea" stroke-width="1.600"/></svg>
<svg style="left:1107.5px;top:799px" width="12.5" height="10" viewBox="0 0 12.5 10"><path d="M1 5.400l3.300 3.300l7-7.700" fill="none" stroke="#e6e8ea" stroke-width="1.500"/></svg>
<div style="left:1423.2px;top:776.4px;width:70.8px;height:34.4px;background:#2d2e2e;"></div>
<div style="left:1458px;top:776.4px;width:1px;height:34.4px;background:#262727;"></div>
<div style="left:1432.8px;top:787px;width:6px;height:15.6px;background:#b9bdbb;"></div>
<div style="left:1442.8px;top:787px;width:5.9px;height:15.6px;background:#b9bdbb;"></div>
<svg style="left:1465.8px;top:786.6px" width="21.8" height="16.4" viewBox="0 0 21.8 16.4"><rect x="0.700" y="0.800" width="20.400" height="14.800" fill="none" stroke="#b4b8b6" stroke-width="1.200"/><circle cx="10.700" cy="6" r="2.500" fill="#b9bdbb"/><path d="M4.800 15.400c0.400-3.600 2.800-4.300 4.600-4.900c0.600-.2 2-.2 2.600 0c1.800 .6 4.200 1.300 4.600 4.900z" fill="#b9bdbb"/><path d="M9.500 7.500h2.400v3.500h-2.400z" fill="#b9bdbb"/></svg>
<div style="left:284.800px;top:277.300px;width:514.500px;height:97.600px;background:#455364;border:1px solid #64798b"></div>
<span class="mono" style="left:289.300px;top:283.52px;font-size:12.780px;color:#d6dadd;">Built-in mutable sequence.</span>
<span class="mono" style="left:289.300px;top:314.87px;font-size:12.780px;color:#d6dadd;">If no argument is given, the constructor creates a new empty list.</span>
<span class="mono" style="left:289.300px;top:329.97px;font-size:12.780px;color:#d6dadd;">The argument must be an iterable if specified.</span>
<span class="mono" style="left:289.300px;top:359.27px;font-size:12.780px;color:#2b93df;font-style:italic;">Click anywhere in this tooltip for additional help</span>
<div style="left:289px;top:349px;width:506.5px;height:1.2px;background:#8d9aa6;"></div>
<svg style="left:342.5px;top:357.5px" width="13" height="20" viewBox="0 0 13 20"><path d="M0.800 0.800v15.400l3.400-3.300l2.300 5.300l2.200-1l-2.300-5.200h4.700z" fill="#fff" stroke="#151515" stroke-width="1" stroke-linejoin="round"/></svg>
<svg style="left:1466.4px;top:403.1px" width="15.5" height="23" viewBox="0 0 15.5 23"><path d="M0.800 0.800v18.200l4.200-4l2.800 6.400l2.600-1.200l-2.800-6.300h5.900z" fill="#fff" stroke="#444" stroke-width="1.200" stroke-linejoin="round"/></svg>
</div></body></html>
